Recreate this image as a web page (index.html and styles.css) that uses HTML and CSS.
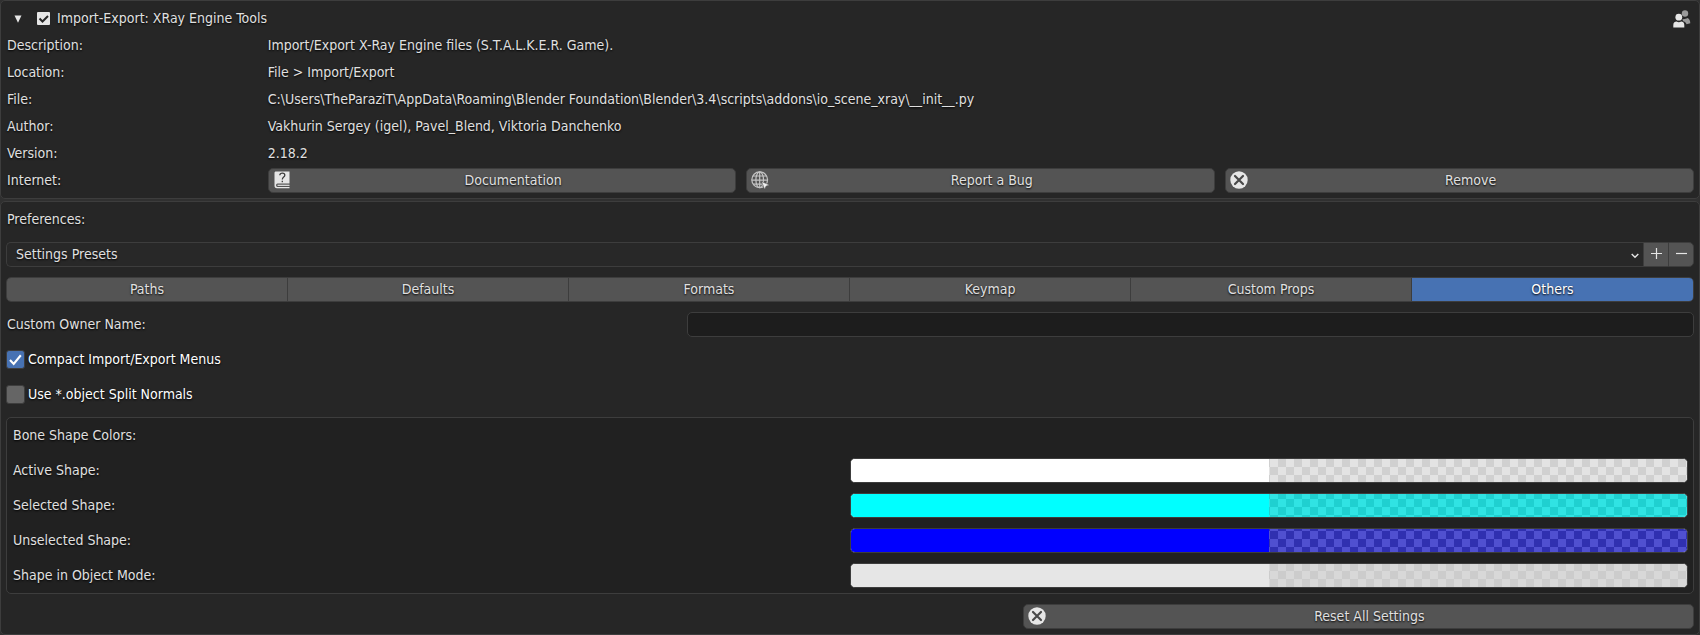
FILE: index.html
```html
<!DOCTYPE html>
<html lang="en">
<head>
<meta charset="utf-8">
<title>Add-on Preferences</title>
<link rel="stylesheet" href="styles.css">
</head>
<body>
<main class="page">
  <section class="panel info">
    <header class="info-head">
      <button class="fold" type="button" aria-label="Collapse"><svg width="8" height="8" viewBox="0 0 8 8"><path d="M0.5 0.5h7L4 7.800z" fill="#e6e6e6"/></svg></button>
      <label class="enable"><input class="check-plain" type="checkbox" checked>Import-Export: XRay Engine Tools</label>
      <svg class="community" width="18" height="18" viewBox="0 0 18 18"><g fill="#9a9a9a"><circle cx="12" cy="3.500" r="3.200"/><path d="M9.500 9c1.500.4 3.500-.2 5-1 1.800.8 2.800 2.500 2.800 5.300l-3.800.9c-.5-1.700-2-2.800-3.500-3z"/></g><g fill="#e6e6e6"><circle cx="5.800" cy="7.200" r="3.400"/><path d="M0.300 17.500v-2.500c0-2.600 1.800-3.500 3.200-3.500 1.500 1 3.200 1 4.700 0 1.600 0 3.100 1 3.100 3.500v2.500z"/></g></svg>
    </header>
    <dl class="facts">
      <div class="fact"><dt>Description:</dt><dd>Import/Export X-Ray Engine files (S.T.A.L.K.E.R. Game).</dd></div>
      <div class="fact"><dt>Location:</dt><dd>File &gt; Import/Export</dd></div>
      <div class="fact"><dt>File:</dt><dd>C:\Users\TheParaziT\AppData\Roaming\Blender Foundation\Blender\3.4\scripts\addons\io_scene_xray\__init__.py</dd></div>
      <div class="fact"><dt>Author:</dt><dd>Vakhurin Sergey (igel), Pavel_Blend, Viktoria Danchenko</dd></div>
      <div class="fact"><dt>Version:</dt><dd>2.18.2</dd></div>
      <div class="fact"><dt>Internet:</dt><dd class="links">
        <button class="btn" type="button"><svg class="icon" width="18" height="18" viewBox="0 0 18 18"><path d="M3 .5h13.500v12H4.500c-1.800 0-1.800 3.500 0 3.500h12v1.200H4c-1.800 0-2.500-1-2.500-2.700V2c0-1 .5-1.500 1.500-1.500z" fill="#e6e6e6"/><path d="M4.500 13.700h12v1.200h-12z" fill="#e6e6e6"/><path d="M6.800 4.200c.2-2.800 5-2.800 5 0 0 2-2.500 1.800-2.500 4.300M9.300 9.800v1.500" fill="none" stroke="#3c3c3c" stroke-width="1.300"/></svg><span>Documentation</span></button>
        <button class="btn" type="button"><svg class="icon" width="18" height="18" viewBox="0 0 18 18"><g fill="none" stroke="#c4c4c4" stroke-width="1.200"><circle cx="8.700" cy="8.800" r="7.900"/><ellipse cx="8.700" cy="8.800" rx="3.800" ry="7.900"/><path d="M8.700 1v15.600M2 5h13.400M.8 9.200h15.800M2 13.200h13.400"/></g><path d="M10.500 10.500l8 3.500-3.500 1.200-1.300 3.300z" fill="#f0f0f0" stroke="#545454" stroke-width=".6"/></svg><span>Report a Bug</span></button>
        <button class="btn" type="button"><svg class="icon" width="18" height="18" viewBox="0 0 18 18"><circle cx="9" cy="9" r="8.700" fill="#e6e6e6"/><path d="M5 5l8 8M13 5l-8 8" stroke="#484848" stroke-width="2.200" stroke-linecap="round"/></svg><span>Remove</span></button>
      </dd></div>
    </dl>
  </section>

  <section class="panel prefs">
    <h2 class="row title">Preferences:</h2>
    <div class="row presets">
      <select class="preset-select" aria-label="Presets"><option>Settings Presets</option></select>
      <button class="mini" type="button" aria-label="Add preset"><svg width="13" height="13" viewBox="0 0 13 13"><path d="M6.500 1v11M1 6.500h11" stroke="#e6e6e6" stroke-width="1.200"/></svg></button>
      <button class="mini" type="button" aria-label="Remove preset"><svg width="13" height="13" viewBox="0 0 13 13"><path d="M1 6.500h11" stroke="#e6e6e6" stroke-width="1.200"/></svg></button>
    </div>
    <nav class="row tabs">
      <button class="tab" type="button">Paths</button>
      <button class="tab" type="button">Defaults</button>
      <button class="tab" type="button">Formats</button>
      <button class="tab" type="button">Keymap</button>
      <button class="tab" type="button">Custom Props</button>
      <button class="tab active" type="button">Others</button>
    </nav>
    <div class="row owner">
      <label for="owner">Custom Owner Name:</label>
      <input class="text" id="owner" type="text">
    </div>
    <label class="row option"><input class="check" type="checkbox" checked>Compact Import/Export Menus</label>
    <label class="row option"><input class="check" type="checkbox">Use *.object Split Normals</label>
    <div class="box">
      <h3 class="row title">Bone Shape Colors:</h3>
      <div class="row color"><span id="c1">Active Shape:</span><button class="swatch white" type="button" aria-labelledby="c1"></button></div>
      <div class="row color"><span id="c2">Selected Shape:</span><button class="swatch cyan" type="button" aria-labelledby="c2"></button></div>
      <div class="row color"><span id="c3">Unselected Shape:</span><button class="swatch blue" type="button" aria-labelledby="c3"></button></div>
      <div class="row color"><span id="c4">Shape in Object Mode:</span><button class="swatch grey" type="button" aria-labelledby="c4"></button></div>
    </div>
    <div class="row reset">
      <button class="btn" type="button"><svg class="icon" width="18" height="18" viewBox="0 0 18 18"><circle cx="9" cy="9" r="8.700" fill="#e6e6e6"/><path d="M5 5l8 8M13 5l-8 8" stroke="#484848" stroke-width="2.200" stroke-linecap="round"/></svg><span>Reset All Settings</span></button>
    </div>
  </section>
</main>
</body>
</html>
```
FILE: styles.css
```css
* { box-sizing: border-box; }

body {
  margin: 0;
  background: #303030;
  color: #e0e0e0;
  font: 14px/25px "DejaVu Sans Condensed", "DejaVu Sans", sans-serif;
  text-shadow: 0 1px 2px #000;
}

button, input, select {
  font: inherit;
  color: inherit;
  text-shadow: inherit;
  margin: 0;
}

h2, h3, dl, dd { margin: 0; font: inherit; }

.page { display: flex; flex-direction: column; gap: 2px; }

.panel {
  background: #262626;
  border: 1px solid #3d3d3d;
  border-radius: 5px;
  padding: 4px 5px;
}

.info-head {
  display: flex;
  align-items: center;
  height: 27px;
  padding: 0 3px 0 8px;
}

.fold {
  display: flex;
  padding: 0;
  border: 0;
  background: none;
}

.enable {
  display: flex;
  align-items: center;
  gap: 7px;
  margin-left: 15px;
}

.community { margin-left: auto; }

.fact {
  display: grid;
  grid-template-columns: 15fr 85fr;
  gap: 10px;
  height: 27px;
  align-items: center;
}

.fact dt { padding-left: 1px; }

.links {
  display: grid;
  grid-template-columns: repeat(3, 1fr);
  gap: 10px;
}

.btn {
  position: relative;
  height: 25px;
  padding: 0 0 0 22px;
  border: 1px solid #3d3d3d;
  border-radius: 5px;
  background: #545454;
  line-height: 23px;
}

.icon {
  position: absolute;
  left: 4px;
  top: 2px;
}

.prefs {
  display: flex;
  flex-direction: column;
  gap: 10px;
  padding: 5px;
}

.row { height: 25px; }

.title { padding-left: 1px; }

.presets { display: flex; }

.preset-select {
  flex: 1;
  appearance: none;
  padding: 0 9px;
  border: 1px solid #3d3d3d;
  border-right: 0;
  border-radius: 5px 0 0 5px;
  background: #282828 url("data:image/svg+xml,%3Csvg xmlns='http://www.w3.org/2000/svg' width='8' height='6' viewBox='0 0 8 6'%3E%3Cpath d='M.7 1l3.300 3.300L7.300 1' fill='none' stroke='%23e6e6e6' stroke-width='1.400'/%3E%3C/svg%3E") no-repeat right 4px top 10px;
  line-height: 23px;
}

.mini {
  display: flex;
  align-items: center;
  justify-content: center;
  width: 25px;
  padding: 0 0 2px;
  border: 1px solid #3d3d3d;
  border-right: 0;
  background: #545454;
}

.mini:last-child {
  width: 26px;
  border-right: 1px solid #3d3d3d;
  border-radius: 0 5px 5px 0;
}

.tabs {
  display: grid;
  grid-template-columns: repeat(6, 1fr);
  border: 1px solid #3d3d3d;
  border-radius: 5px;
  overflow: hidden;
}

.tab {
  padding: 0;
  border: 0;
  border-right: 1px solid #3d3d3d;
  background: #545454;
  line-height: 23px;
}

.tab:last-child { border-right: 0; }

.tab.active { background: #4772b3; color: #fff; }

.owner {
  display: grid;
  grid-template-columns: 2fr 3fr;
  gap: 10px;
}

.owner label { padding-left: 1px; }

.text {
  min-width: 0;
  height: 25px;
  padding: 0 8px;
  border: 1px solid #3d3d3d;
  border-radius: 5px;
  background: #1d1d1d;
  line-height: 23px;
}

.option {
  display: flex;
  align-items: center;
  gap: 3px;
  color: #fff;
}

.check, .check-plain {
  appearance: none;
  display: block;
  border-radius: 3px;
}

.check {
  width: 19px;
  height: 19px;
  border: 1px solid #3d3d3d;
  background: #656565;
}

.check:checked {
  background: #4772b3 url("data:image/svg+xml,%3Csvg xmlns='http://www.w3.org/2000/svg' viewBox='0 0 16 16'%3E%3Cpath d='M2.800 8.500l3.500 3.700L13 4' fill='none' stroke='white' stroke-width='2'/%3E%3C/svg%3E");
}

.check-plain {
  width: 13px;
  height: 13px;
  border-radius: 1px;
  background: #e6e6e6 url("data:image/svg+xml,%3Csvg xmlns='http://www.w3.org/2000/svg' viewBox='0 0 13 13'%3E%3Cpath d='M2.500 6.500l3 3L11 4' fill='none' stroke='%23262626' stroke-width='2'/%3E%3C/svg%3E");
}

.box {
  display: flex;
  flex-direction: column;
  gap: 10px;
  padding: 5px;
  border: 1px solid #3d3d3d;
  border-radius: 5px;
  background: #212121;
}

.color {
  display: grid;
  grid-template-columns: 1fr 1fr;
}

.color span { padding-left: 1px; }

.swatch {
  display: flex;
  padding: 0;
  border: 1px solid #3d3d3d;
  border-radius: 5px;
  overflow: hidden;
}

.swatch::before, .swatch::after {
  content: "";
  flex: 1;
  align-self: stretch;
}

.swatch::before { background: var(--solid); }

.swatch::after {
  background: repeating-conic-gradient(var(--a) 0 25%, var(--b) 0 50%) fixed 6px 3px / 16px 16px;
}

.white { --solid: #fff; --a: #e3e3e3; --b: #d0d0d0; }
.cyan { --solid: #0ff; --a: #30e3e3; --b: #1fd0d0; }
.blue { --solid: #00f; --a: #5050d0; --b: #3030b0; }
.grey { --solid: #e6e6e6; --a: #d8d8d8; --b: #cccccc; }

.reset {
  display: grid;
  grid-template-columns: 3fr 2fr;
  gap: 10px;
}

.reset .btn { grid-column: 2; }
```
